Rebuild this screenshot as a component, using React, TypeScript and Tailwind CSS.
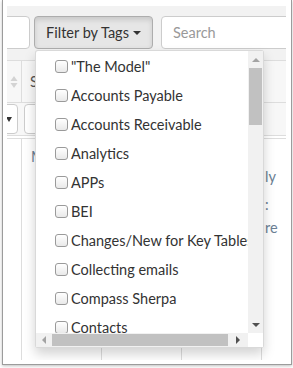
import React from "react";

const tags = [
    '"The Model"',
    "Accounts Payable",
    "Accounts Receivable",
    "Analytics",
    "APPs",
    "BEI",
    "Changes/New for Key Tables",
    "Collecting emails",
    "Compass Sherpa",
    "Contacts",
];

const font = { fontFamily: "Lato, 'Open Sans', sans-serif" };

const App = () => {
    return (
        <div className="w-[293px] h-[368px] bg-white overflow-hidden" style={font}>
            {/* window frame */}
            <div className="ml-[2px] w-[290px] h-[365px] border-x border-b border-[#9c9c9c] bg-white pl-[4px] pt-[6px] shadow-[0_1px_3px_rgba(0,0,0,0.25)]">
                <div className="relative w-[279px] h-[354px] overflow-hidden bg-[#f2f2f2] flex flex-col">
                    {/* toolbar */}
                    <div className="flex mt-[10px] h-[33px] shrink-0">
                        <div className="w-[40px] -ml-[17px] h-[33px] bg-white border border-[#ccc] rounded-[4px] shrink-0"></div>
                        <button className="ml-[4px] w-[119px] h-[33px] shrink-0 flex items-center justify-center gap-[4px] bg-[#e6e6e6] border border-[#adadad] rounded-[4px] shadow-[inset_0_3px_5px_rgba(0,0,0,0.125)] text-[14.5px] text-[#333]">
                            <span>Filter by Tags</span>
                            <span className="w-0 h-0 border-x-[4px] border-x-transparent border-t-[4px] border-t-[#333] mt-[1px]"></span>
                        </button>
                        <div className="ml-[8px] w-[160px] h-[33px] shrink-0 bg-white border border-[#ccc] rounded-[4px] flex items-center pl-[11px] text-[14.5px] text-[#999]">
                            Search
                        </div>
                    </div>

                    <div className="h-[11px] shrink-0"></div>

                    {/* header row */}
                    <div className="flex h-[43px] shrink-0 border-y border-[#ddd] bg-[#f7f7f7]">
                        <div className="w-[15px] shrink-0 border-r border-[#ddd] flex items-center justify-center">
                            <svg width="8" height="14" viewBox="0 0 8 14">
                                <path d="M4 1 L7.5 6 L0.5 6 Z" fill="#d3d3d3" />
                                <path d="M4 13 L7.5 8 L0.5 8 Z" fill="#d3d3d3" />
                            </svg>
                        </div>
                        <div className="pl-[8px] flex items-center text-[14.5px] text-[#555]">Status</div>
                    </div>

                    {/* filter row */}
                    <div className="flex h-[32px] shrink-0 bg-[#f7f7f7] items-start pt-[1px]">
                        <div className="w-[20px] -ml-[9px] h-[30px] shrink-0 bg-white border border-[#ccc] rounded-[4px] flex items-center justify-end pr-[5px]">
                            <span className="w-0 h-0 border-x-[3.5px] border-x-transparent border-t-[5px] border-t-[#333]"></span>
                        </div>
                        <div className="ml-[6px] w-[70px] h-[30px] shrink-0 bg-white border border-[#ccc] rounded-[4px]"></div>
                    </div>
                    <div className="h-[1px] bg-[#ddd] shrink-0"></div>
                    <div className="h-[2px] bg-white shrink-0"></div>
                    <div className="h-[1px] bg-[#ddd] shrink-0"></div>

                    {/* body */}
                    <div className="flex flex-1 bg-white text-[14.5px] text-[#6b7f94]">
                        <div className="w-[15px] shrink-0 border-r border-[#ddd]"></div>
                        <div className="w-[80px] shrink-0 border-r border-[#ddd] pl-[9px] pt-[8px] leading-[20px]">Monthly</div>
                        <div className="w-[80px] shrink-0 border-r border-[#ddd]"></div>
                        <div className="w-[80px] shrink-0 border-r border-[#ddd]"></div>
                        <div className="flex-1 pl-[3px] leading-[20px]">
                            <div className="mt-[28px]">ly</div>
                            <div className="mt-[8px]">:</div>
                            <div className="mt-[3px]">re</div>
                        </div>
                    </div>

                    {/* dropdown menu */}
                    <div className="absolute left-[28px] top-[44px] w-[229px] h-[298px] bg-white border border-[rgba(0,0,0,0.15)] rounded-[3px] shadow-[0_6px_12px_rgba(0,0,0,0.175)] flex flex-col">
                        <div className="flex h-[282px]">
                            <div className="w-[212px] overflow-hidden pt-[1px]">
                                {tags.map((t) => (
                                    <div key={t} className="h-[29px] flex items-center pl-[19px] whitespace-nowrap text-[14.5px] text-[#333]">
                                        <span className="w-[13px] h-[13px] shrink-0 rounded-[3px] border border-[#9a9a9a] bg-gradient-to-b from-white to-[#e9e9e9]"></span>
                                        <span className="ml-[3px]">{t}</span>
                                    </div>
                                ))}
                            </div>
                            <div className="w-[15px] bg-[#f1f1f1] flex flex-col items-center">
                                <div className="h-[17px] flex items-center justify-center">
                                    <span className="w-0 h-0 border-x-[4px] border-x-transparent border-b-[4px] border-b-[#a3a3a3]"></span>
                                </div>
                                <div className="w-[13px] h-[57px] bg-[#c1c1c1]"></div>
                                <div className="flex-1"></div>
                                <div className="h-[16px] flex items-center justify-center">
                                    <span className="w-0 h-0 border-x-[4px] border-x-transparent border-t-[4px] border-t-[#505050]"></span>
                                </div>
                            </div>
                        </div>
                        <div className="flex h-[14px]">
                            <div className="w-[212px] bg-[#f1f1f1] flex items-center">
                                <div className="w-[16px] flex items-center justify-center">
                                    <span className="w-0 h-0 border-y-[4px] border-y-transparent border-r-[4px] border-r-[#a3a3a3]"></span>
                                </div>
                                <div className="w-[176px] h-[12px] bg-[#c1c1c1]"></div>
                                <div className="flex-1 flex items-center justify-center">
                                    <span className="w-0 h-0 border-y-[4px] border-y-transparent border-l-[4px] border-l-[#505050]"></span>
                                </div>
                            </div>
                            <div className="flex-1 bg-white"></div>
                        </div>
                    </div>
                </div>
            </div>
        </div>
    );
};

export default App;
